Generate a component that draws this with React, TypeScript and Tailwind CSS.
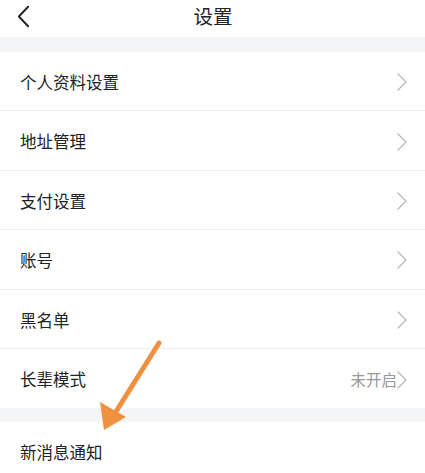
const rows = [
  { label: "个人资料设置" },
  { label: "地址管理" },
  { label: "支付设置" },
  { label: "账号" },
  { label: "黑名单" },
  { label: "长辈模式", value: "未开启" },
];

function Chevron({ className }: { className?: string }) {
  return (
    <svg viewBox="0 0 10 18" className={className} fill="none">
      <path d="M1 1l8 8-8 8" stroke="currentColor" strokeWidth="1.3" strokeLinecap="round" strokeLinejoin="round" />
    </svg>
  );
}

export default function App() {
  return (
    <div
      className="relative w-[425px] h-[473px] overflow-hidden bg-white text-[#222]"
      style={{ fontFamily: '"Noto Sans CJK SC", "Noto Sans", sans-serif' }}
    >
      <header className="relative h-[37px] flex items-center justify-center">
        <svg viewBox="0 0 14 24" className="absolute left-[17px] top-[5px] w-[13px] h-[23px]" fill="none">
          <path d="M12 1.5L2 12l10 10.5" stroke="#222" strokeWidth="2" strokeLinecap="round" strokeLinejoin="round" />
        </svg>
        <span className="text-[19.5px] leading-none mt-[-6px] ml-[1px]">设置</span>
      </header>
      <div className="h-[15px] bg-[#f4f5f7]" />
      <ul>
        {rows.map((r, i) => (
          <li
            key={r.label}
            className={
              "h-[59.4px] flex items-center pl-[20px] pr-[18px] " +
              (i < rows.length - 1 ? "border-b border-[#efefef]" : "")
            }
          >
            <span className="text-[16.5px] leading-none flex-1 mt-[2px]">{r.label}</span>
            {r.value && <span className="text-[15.5px] leading-none text-[#999] mt-[2px]">{r.value}</span>}
            <Chevron className="w-[10px] h-[18px] text-[#b8b8b8] mt-[2px]" />
          </li>
        ))}
      </ul>
      <div className="h-[14px] bg-[#f4f5f7]" />
      <div className="h-[60px] flex items-center pl-[20px]">
        <span className="text-[16.5px] leading-none">新消息通知</span>
      </div>
      <svg className="absolute left-0 top-0 w-[425px] h-[473px] pointer-events-none" viewBox="0 0 425 473">
        <line x1="159" y1="343" x2="117" y2="410" stroke="#ef9140" strokeWidth="5" strokeLinecap="round" />
        <polygon points="104,430 100,402 126,417" fill="#ef9140" />
      </svg>
    </div>
  );
}
